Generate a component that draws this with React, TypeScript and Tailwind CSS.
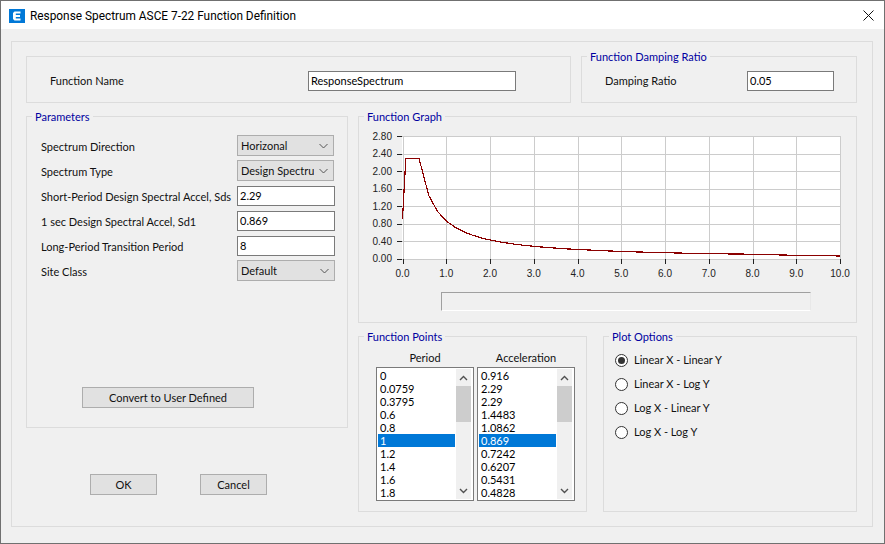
import type { ReactNode } from "react";

const periods = [0, 0.0759, 0.3795, 0.6, 0.8, 1, 1.2, 1.4, 1.6, 1.8];
const accels = ["0.916", "2.29", "2.29", "1.4483", "1.0862", "0.869", "0.7242", "0.6207", "0.5431", "0.4828"];
const plotOptions = ["Linear X - Linear Y", "Linear X - Log Y", "Log X - Linear Y", "Log X - Log Y"];

const xTicks = ["0.0", "1.0", "2.0", "3.0", "4.0", "5.0", "6.0", "7.0", "8.0", "9.0", "10.0"];
const yTicks = ["0.00", "0.40", "0.80", "1.20", "1.60", "2.00", "2.40", "2.80"];

const toX = (t: number) => 402.5 + t * 43.75;
const toY = (v: number) => 259 - v * 43.8;

function curvePoints() {
	const pts: [number, number][] = [
		[0, 0.916],
		[0.0759, 2.29],
		[0.3795, 2.29],
		[0.6, 1.4483],
		[0.8, 1.0862],
	];
	for (let t = 1; t <= 10; t += 0.2) {
		pts.push([t, t <= 8 ? 0.869 / t : (0.869 * 8) / (t * t)]);
	}
	return pts.map(([t, v]) => `${toX(t).toFixed(1)},${toY(v).toFixed(1)}`).join(" ");
}

function GroupBox({ title, className, children }: { title?: string; className: string; children?: ReactNode }) {
	return (
		<div className={`relative border border-[#dcdcdc] ${className}`}>
			{title && (
				<span className="absolute -top-[8px] left-[5px] bg-[#f0f0f0] px-[3px] leading-[16px] text-[#0000a0]">
					{title}
				</span>
			)}
			{children}
		</div>
	);
}

function TextBox({ value, className }: { value: string; className: string }) {
	return (
		<div className={`flex h-[20px] items-center border border-[#7a7a7a] bg-white pl-[2px] text-black ${className}`}>
			{value}
		</div>
	);
}

function Combo({ value, className }: { value: string; className: string }) {
	return (
		<div className={`flex h-[21px] items-center justify-between border border-[#adadad] bg-[#e1e1e1] pl-[3px] ${className}`}>
			<span className="w-[73px] overflow-hidden whitespace-nowrap">{value}</span>
			<svg width="9" height="6" viewBox="0 0 9 6" className="mr-[5px] shrink-0">
				<path d="M0.5 1 L4.5 5 L8.5 1" fill="none" stroke="#555" strokeWidth="1" />
			</svg>
		</div>
	);
}

function Button({ label, className }: { label: string; className: string }) {
	return (
		<div className={`flex h-[21px] items-center justify-center border border-[#adadad] bg-[#e1e1e1] ${className}`}>
			{label}
		</div>
	);
}

function ParamRow({ label, children }: { label: string; children: ReactNode }) {
	return (
		<div className="flex h-[25px] items-center">
			<span className="w-[196px] shrink-0 pt-[2px] whitespace-nowrap">{label}</span>
			{children}
		</div>
	);
}

function ListBox({ items, selected }: { items: string[]; selected: number }) {
	return (
		<div className="flex h-[134px] w-[98px] border border-[#7a7a7a] bg-white pt-[1px] pl-[1px]">
			<div className="flex w-[77px] flex-col">
				{items.map((item, i) => (
					<div
						key={item + i}
						className={`h-[13px] pl-[2px] leading-[13px] ${i === selected ? "bg-[#0078d7] text-white" : "text-black"}`}
					>
						{item}
					</div>
				))}
			</div>
			<div className="ml-[1px] flex h-[130px] w-[15px] flex-col items-center bg-[#f0f0f0]">
				<div className="flex h-[17px] items-center justify-center">
					<svg width="9" height="6" viewBox="0 0 9 6">
						<path d="M1 5 L4.5 1.5 L8 5" fill="none" stroke="#505050" strokeWidth="1.4" />
					</svg>
				</div>
				<div className="h-[36px] w-full bg-[#cdcdcd]" />
				<div className="flex-1" />
				<div className="flex h-[17px] items-center justify-center">
					<svg width="9" height="6" viewBox="0 0 9 6">
						<path d="M1 1 L4.5 4.5 L8 1" fill="none" stroke="#505050" strokeWidth="1.4" />
					</svg>
				</div>
			</div>
		</div>
	);
}

function Graph() {
	return (
		<svg viewBox="360 125 495 155" width="495" height="155" className="mt-[8px] ml-[1px] block">
			<rect x="402" y="136" width="438" height="123" fill="white" />
			{xTicks.map((_, i) => (
				<line key={i} x1={toX(i) + 0.5} x2={toX(i) + 0.5} y1="136" y2="259" stroke="#cccccc" shapeRendering="crispEdges" />
			))}
			{yTicks.map((_, i) => (
				<line key={i} x1="402" x2="840" y1={259 - i * 17.5} y2={259 - i * 17.5} stroke="#cccccc" shapeRendering="crispEdges" />
			))}
			{yTicks.map((label, i) => (
				<g key={label}>
					<line x1="397" x2="402" y1={259 - i * 17.5} y2={259 - i * 17.5} stroke="#222" shapeRendering="crispEdges" />
					<text x="392" y={262 - i * 17.5} textAnchor="end" fontSize="10" fill="#222" fontFamily="Liberation Sans, sans-serif">
						{label}
					</text>
				</g>
			))}
			{xTicks.map((label, i) => (
				<g key={label}>
					<line x1={toX(i) + 0.5} x2={toX(i) + 0.5} y1="259" y2="264" stroke="#222" shapeRendering="crispEdges" />
					<text x={toX(i)} y="277" textAnchor="middle" fontSize="10" fill="#222" fontFamily="Liberation Sans, sans-serif">
						{label}
					</text>
				</g>
			))}
			<polyline points={curvePoints()} fill="none" stroke="#8b0000" strokeWidth="1.2" shapeRendering="crispEdges" />
		</svg>
	);
}

function Logo() {
	return (
		<svg width="16" height="14" viewBox="0 0 16 14" className="shrink-0">
			<rect width="16" height="14" fill="#0078d7" />
			<path d="M5.5 2.5 H11.5 V4.5 H6.8 V6 H11 V8 H6.8 V9.5 H11.5 V11.5 H5.5 L4 10 V4 Z" fill="white" />
		</svg>
	);
}

export default function App() {
	return (
		<div className="flex h-[544px] w-[885px] flex-col border border-[#707070] bg-[#f0f0f0] font-['Lato',sans-serif] text-[11px] leading-[16px] text-[#111]">
			<div className="flex h-[28px] items-center bg-white pt-[2px] pl-[8px]">
				<Logo />
				<span className="ml-[5px] flex-1 font-['Roboto',sans-serif] text-[11.85px] text-black">
					Response Spectrum ASCE 7-22 Function Definition
				</span>
				<svg width="11" height="11" viewBox="0 0 11 11" className="mr-[10px] mb-[1px]">
					<path d="M0.5 0.5 L10.5 10.5 M10.5 0.5 L0.5 10.5" stroke="#111" strokeWidth="1" />
				</svg>
			</div>

			<div className="mt-[12px] ml-[10px] flex h-[486px] w-[862px] flex-col border border-[#dcdcdc] pt-[14px] pl-[14px]">
				<div className="flex gap-[10px]">
					<GroupBox className="flex h-[47px] w-[545px] items-center pt-[3px] pl-[23px]">
						<span className="w-[258px]">Function Name</span>
						<TextBox value="ResponseSpectrum" className="w-[208px]" />
					</GroupBox>
					<GroupBox title="Function Damping Ratio" className="flex h-[47px] w-[276px] items-center pt-[3px] pl-[23px]">
						<span className="w-[142px]">Damping Ratio</span>
						<TextBox value="0.05" className="w-[87px]" />
					</GroupBox>
				</div>

				<div className="mt-[13px] flex gap-[10px]">
					<div className="flex w-[322px] flex-col">
						<GroupBox title="Parameters" className="flex h-[312px] flex-col pt-[16px] pl-[14px]">
							<ParamRow label="Spectrum Direction">
								<Combo value="Horizonal" className="w-[97px]" />
							</ParamRow>
							<ParamRow label="Spectrum Type">
								<Combo value="Design Spectrum" className="w-[97px]" />
							</ParamRow>
							<ParamRow label="Short-Period Design Spectral Accel, Sds">
								<TextBox value="2.29" className="w-[98px]" />
							</ParamRow>
							<ParamRow label="1 sec Design Spectral Accel, Sd1">
								<TextBox value="0.869" className="w-[98px]" />
							</ParamRow>
							<ParamRow label="Long-Period Transition Period">
								<TextBox value="8" className="w-[98px]" />
							</ParamRow>
							<ParamRow label="Site Class">
								<Combo value="Default" className="w-[98px]" />
							</ParamRow>
							<Button label="Convert to User Defined" className="mt-[104px] ml-[41px] w-[172px]" />
						</GroupBox>
						<div className="mt-[46px] flex gap-[43px] pl-[64px]">
							<Button label="OK" className="w-[67px]" />
							<Button label="Cancel" className="w-[67px]" />
						</div>
					</div>

					<div className="flex w-[499px] flex-col">
						<GroupBox title="Function Graph" className="h-[207px]">
							<Graph />
							<div className="mt-[12px] ml-[82px] h-[19px] w-[370px] border border-[#a0a0a0] border-r-[#e8e8e8] border-b-white" />
						</GroupBox>
						<div className="mt-[13px] flex gap-[16px]">
							<GroupBox title="Function Points" className="h-[176px] w-[229px] pt-[13px] pl-[17px]">
								<div className="flex gap-[3px]">
									<div className="flex w-[98px] flex-col items-center">
										<span className="h-[17px]">Period</span>
										<ListBox items={periods.map(String)} selected={5} />
									</div>
									<div className="flex w-[98px] flex-col items-center">
										<span className="h-[17px]">Acceleration</span>
										<ListBox items={accels} selected={5} />
									</div>
								</div>
							</GroupBox>
							<GroupBox title="Plot Options" className="h-[176px] w-[254px] pt-[11px] pl-[11px]">
								{plotOptions.map((option, i) => (
									<div key={option} className="flex h-[24px] items-center gap-[6px]">
										<span className="flex h-[13px] w-[13px] items-center justify-center rounded-full border border-[#333] bg-white">
											{i === 0 && <span className="h-[7px] w-[7px] rounded-full bg-[#333]" />}
										</span>
										{option}
									</div>
								))}
							</GroupBox>
						</div>
					</div>
				</div>
			</div>
		</div>
	);
}
